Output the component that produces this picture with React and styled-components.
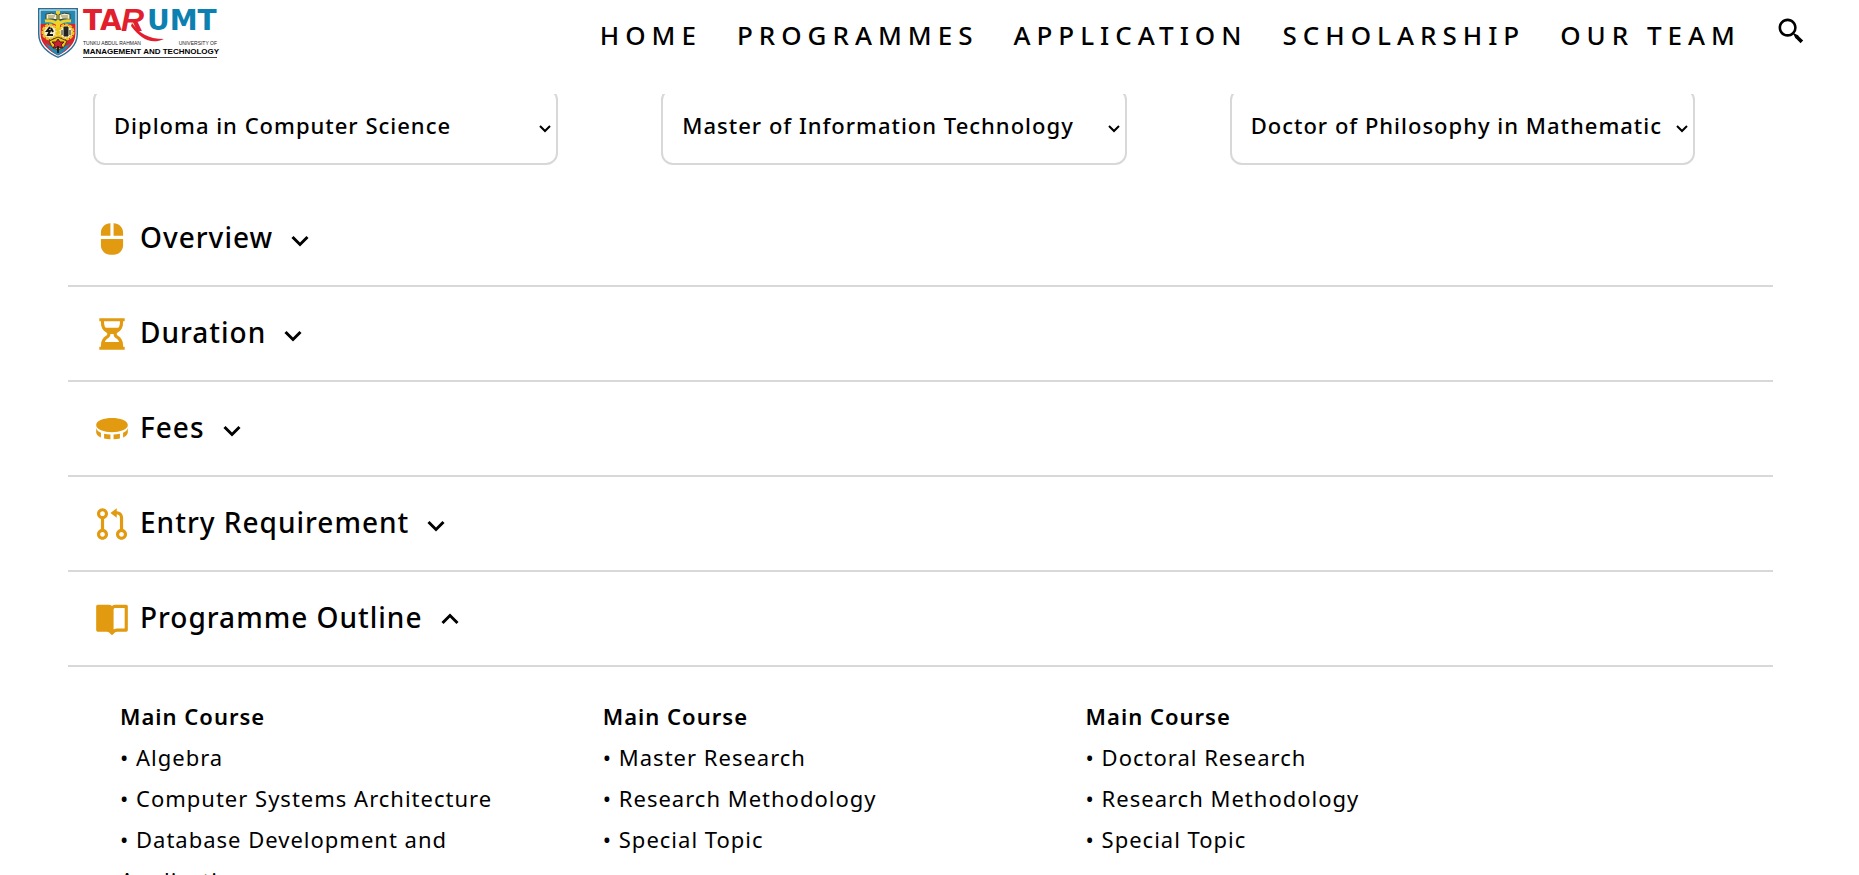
import React, { useState } from "react";
import styled, { createGlobalStyle } from "styled-components";
import {
  BiSolidMouseAlt,
  BiSolidHourglass,
  BiSolidCoin,
  BiGitPullRequest,
  BiSolidBookOpen,
  BiChevronDown,
  BiChevronUp,
  BiSearchAlt2,
} from "react-icons/bi";

const GlobalStyle = createGlobalStyle`
  * { box-sizing: border-box; }
  body {
    margin: 0;
    background: #fff;
    color: #000;
    font-family: "Noto Sans", sans-serif;
    letter-spacing: 1px;
  }
`;

const Header = styled.header`
  position: sticky;
  top: 0;
  z-index: 10;
  display: flex;
  align-items: flex-start;
  justify-content: space-between;
  height: 94px;
  padding: 6px 52px 0 37px;
  background: #fff;
`;

const LogoLink = styled.a`
  display: block;
  line-height: 0;
`;

const Nav = styled.nav`
  display: flex;
  align-items: flex-start;
  gap: 35px;
`;

const NavLink = styled.a`
  color: #000;
  font-size: 26px;
  font-weight: 500;
  line-height: 36px;
  letter-spacing: 6px;
  text-decoration: none;
  text-transform: uppercase;
  padding-top: 11px;
`;

const SearchButton = styled.button`
  display: flex;
  padding: 10px 0 0;
  border: 0;
  background: none;
  color: #000;
  font-size: 31px;
  cursor: pointer;
`;

const Main = styled.main`
  margin-top: -6px;
  padding: 0 86px 0 68px;
`;

const Pickers = styled.div`
  display: grid;
  grid-template-columns: repeat(3, minmax(0, 1fr));
  margin-bottom: 27px;
`;

const PickerCell = styled.div`
  display: grid;
  grid-template: "field" / minmax(0, 1fr);
  align-items: center;
  padding: 0 78px 0 25px;
`;

const Picker = styled.select`
  grid-area: field;
  appearance: none;
  width: 100%;
  height: 77px;
  padding: 0 28px 3px 19px;
  border: 2px solid #d8d8d8;
  border-radius: 12px;
  background: #fff;
  color: #000;
  font-family: inherit;
  font-size: 22px;
  font-weight: 500;
  letter-spacing: 1px;
`;

const PickerArrow = styled(BiChevronDown)`
  grid-area: field;
  justify-self: end;
  margin: 2px 1px 0 0;
  font-size: 24px;
  pointer-events: none;
`;

const SectionToggle = styled.button`
  display: flex;
  align-items: center;
  width: 100%;
  height: 95px;
  padding: 0 0 0 25px;
  border: 0;
  border-bottom: 2px solid #d8d8d8;
  background: none;
  color: #000;
  font-family: inherit;
  letter-spacing: 1px;
  text-align: left;
  cursor: pointer;
`;

const SectionIcon = styled.span`
  display: flex;
  margin-right: 9px;
  color: #e29a10;
  font-size: 38px;
`;

const SectionTitle = styled.span`
  padding-bottom: 4px;
  font-size: 28px;
  font-weight: 500;
  line-height: 40px;
`;

const SectionChevron = styled.span`
  display: flex;
  margin-left: 9px;
  padding-top: 2px;
  font-size: 36px;
`;

const Outline = styled.div`
  display: grid;
  grid-template-columns: repeat(3, minmax(0, 1fr));
  padding: 29px 12% 40px 52px;
`;

const Course = styled.section`
  padding-right: 40px;
  font-size: 22px;
  line-height: 41px;
`;

const CourseTitle = styled.h3`
  margin: 0;
  font-size: inherit;
  font-weight: 600;
`;

const CourseList = styled.ul`
  margin: 0;
  padding: 0;
  list-style: none;
`;

const CourseItem = styled.li`
  &::before {
    content: "• ";
  }
`;

const LogoText = styled.text`
  font-family: ${(p) => p.$family || '"Liberation Sans"'}, sans-serif;
  font-size: ${(p) => p.$size}px;
  font-weight: ${(p) => p.$weight || 400};
  letter-spacing: 0;
`;

function Logo() {
  return (
    <svg width="190" height="54" viewBox="0 0 190 54" role="img" aria-label="TAR UMT">
      {/* shield */}
      <path d="M1 2H41V28C41 40 31 48 21 52C11 48 1 40 1 28Z" fill="#2b6f94" />
      <path d="M2.500 3.500H39.500V28C39.500 39 31 46 21 50.500C11 46 2.500 39 2.500 28Z" fill="#fff" />
      <path d="M3.500 4.500H38.500V18H3.500Z" fill="#2588b4" />
      <path d="M3.500 18H38.500V28C38.500 38 30 45 21 49.500C12 45 3.500 38 3.500 28Z" fill="#d8232f" />
      <path d="M8 37Q21 46 34 37Q29 45 21 49.500Q13 45 8 37Z" fill="#2588b4" />
      <path d="M19 5H23V40H19Z" fill="#f1d22b" />
      <path d="M9 8Q15 6 20 8.500V14Q15 12 9 13.500ZM33 8Q27 6 22 8.500V14Q27 12 33 13.500Z" fill="#f5efcf" stroke="#32412f" strokeWidth="1" />
      <path d="M11 10H18M11 12H17M24 10H31M25 12H31" stroke="#958950" strokeWidth="1" />
      <path d="M8 15Q15 14 19 17L21 19L23 17Q27 14 34 15" fill="none" stroke="#f1d22b" strokeWidth="3" />
      <circle cx="13" cy="26" r="7" fill="#f5efcf" stroke="#eac51c" strokeWidth="3" strokeDasharray="3 1" />
      <circle cx="29" cy="26" r="7" fill="#f5efcf" stroke="#eac51c" strokeWidth="3" strokeDasharray="3 1" />
      <path d="M13 21L10 25H13L11 29H16M14 22L16 26" fill="none" stroke="#151515" strokeWidth="2" />
      <path d="M27 21H31V30H27ZM25 24V29M33 24V29" fill="#222" stroke="#222" strokeWidth="1" />
      <path d="M12 35L21 31L30 35L27 41L21 44L15 41Z" fill="#eac51c" stroke="#4a4420" strokeWidth="1" />
      <path d="M21 33L23 36L27 36L24 39L26 42L21 41L16 42L18 39L15 36L19 36Z" fill="#c9202e" stroke="#60151b" strokeWidth="1" />
      <path d="M21 40V47" stroke="#222" strokeWidth="2" />
      {/* word mark */}
      <LogoText x="46" y="24" $size="28" $weight="700" $family='"DejaVu Sans"' fill="#e11f2d">TA</LogoText>
      <LogoText x="84" y="25" $size="32" $weight="700" fill="#e11f2d" fontStyle="italic">R</LogoText>
      <path d="M95 17C102 27 111 33 127 33C114 39 104 33 94 20Z" fill="#e11f2d" />
      <LogoText x="110" y="24" $size="28" $weight="700" $family='"DejaVu Sans"' fill="#0c80b0">UMT</LogoText>
      <LogoText x="46" y="39" $size="5" fill="#222">TUNKU ABDUL RAHMAN</LogoText>
      <LogoText x="180" y="39" $size="5" fill="#222" textAnchor="end">UNIVERSITY OF</LogoText>
      <LogoText x="46" y="48" $size="8" $weight="700" fill="#000">MANAGEMENT AND TECHNOLOGY</LogoText>
      <path d="M46 51.500H180" stroke="#444" strokeWidth="1" />
    </svg>
  );
}

const links = ["Home", "Programmes", "Application", "Scholarship", "Our Team"];

const pickers = [
  { label: "Diploma programme", value: "Diploma in Computer Science" },
  { label: "Master programme", value: "Master of Information Technology" },
  { label: "Doctorate programme", value: "Doctor of Philosophy in Mathematic" },
];

const sections = [
  { title: "Overview", Icon: BiSolidMouseAlt },
  { title: "Duration", Icon: BiSolidHourglass },
  { title: "Fees", Icon: BiSolidCoin },
  { title: "Entry Requirement", Icon: BiGitPullRequest },
  { title: "Programme Outline", Icon: BiSolidBookOpen },
];

const courses = [
  ["Algebra", "Computer Systems Architecture", "Database Development and Application"],
  ["Master Research", "Research Methodology", "Special Topic"],
  ["Doctoral Research", "Research Methodology", "Special Topic"],
];

export default function App() {
  const [open, setOpen] = useState("Programme Outline");
  return (
    <>
      <GlobalStyle />
      <Header>
        <LogoLink href="#home">
          <Logo />
        </LogoLink>
        <Nav>
          {links.map((link) => (
            <NavLink key={link} href={"#" + link.toLowerCase().replace(" ", "-")}>
              {link}
            </NavLink>
          ))}
          <SearchButton type="button" aria-label="Search">
            <BiSearchAlt2 />
          </SearchButton>
        </Nav>
      </Header>
      <Main>
        <Pickers>
          {pickers.map(({ label, value }) => (
            <PickerCell key={label}>
              <Picker aria-label={label} defaultValue={value}>
                <option>{value}</option>
              </Picker>
              <PickerArrow aria-hidden="true" />
            </PickerCell>
          ))}
        </Pickers>
        {sections.map(({ title, Icon }) => (
          <SectionToggle
            key={title}
            type="button"
            aria-expanded={open === title}
            onClick={() => setOpen(open === title ? "" : title)}
          >
            <SectionIcon>
              <Icon />
            </SectionIcon>
            <SectionTitle>{title}</SectionTitle>
            <SectionChevron>{open === title ? <BiChevronUp /> : <BiChevronDown />}</SectionChevron>
          </SectionToggle>
        ))}
        {open === "Programme Outline" && (
          <Outline>
            {courses.map((items, i) => (
              <Course key={i}>
                <CourseTitle>Main Course</CourseTitle>
                <CourseList>
                  {items.map((item) => (
                    <CourseItem key={item}>{item}</CourseItem>
                  ))}
                </CourseList>
              </Course>
            ))}
          </Outline>
        )}
      </Main>
    </>
  );
}
